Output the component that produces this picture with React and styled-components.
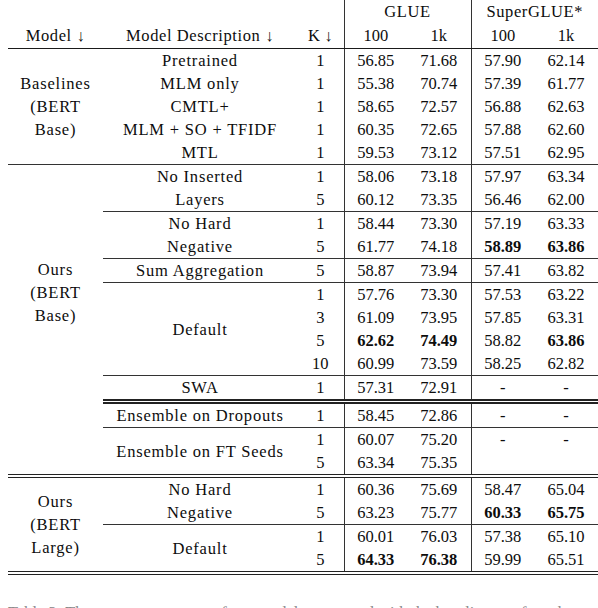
import React from "react"
import styled, { createGlobalStyle } from "styled-components"

const serif = `"Liberation Serif", "Times New Roman", "DejaVu Serif", serif`

const GlobalStyle = createGlobalStyle`
  html, body {
    margin: 0;
    padding: 0;
    background: #fff;
  }
  body {
    font-family: ${serif};
    color: #0d0d0d;
  }
`

const lines = {
  rule: "1px solid #333",
  head: "1px solid #1a1a1a",
  double: "5px double #222",
  section: "4px double #222",
  bottom: "4px double #222",
}

const widths = [95, 194, 47, 63, 64, 63, 64]

const rows = [
  { model: { text: ["Baselines", "(BERT", "Base)"], span: 5, line: "rule" }, desc: { text: ["Pretrained"] }, k: 1, v: ["56.85", "71.68", "57.90", "62.14"] },
  { desc: { text: ["MLM only"] }, k: 1, v: ["55.38", "70.74", "57.39", "61.77"] },
  { desc: { text: ["CMTL+"] }, k: 1, v: ["58.65", "72.57", "56.88", "62.63"] },
  { desc: { text: ["MLM + SO + TFIDF"] }, k: 1, v: ["60.35", "72.65", "57.88", "62.60"] },
  { desc: { text: ["MTL"], line: "rule" }, k: 1, v: ["59.53", "73.12", "57.51", "62.95"], line: "rule" },

  { model: { text: ["Ours", "(BERT", "Base)"], span: 13, line: "section", top: 93 }, desc: { text: ["No Inserted", "Layers"], span: 2, line: "rule" }, k: 1, v: ["58.06", "73.18", "57.97", "63.34"] },
  { k: 5, v: ["60.12", "73.35", "56.46", "62.00"], line: "rule" },
  { desc: { text: ["No Hard", "Negative"], span: 2, line: "rule" }, k: 1, v: ["58.44", "73.30", "57.19", "63.33"] },
  { k: 5, v: ["61.77", "74.18", "58.89", "63.86"], b: [2, 3], line: "rule" },
  { desc: { text: ["Sum Aggregation"], line: "rule" }, k: 5, v: ["58.87", "73.94", "57.41", "63.82"], line: "rule" },
  { desc: { text: ["Default"], span: 4, line: "rule" }, k: 1, v: ["57.76", "73.30", "57.53", "63.22"] },
  { k: 3, v: ["61.09", "73.95", "57.85", "63.31"] },
  { k: 5, v: ["62.62", "74.49", "58.82", "63.86"], b: [0, 1, 3] },
  { k: 10, v: ["60.99", "73.59", "58.25", "62.82"], line: "rule" },
  { desc: { text: ["SWA"], line: "double" }, k: 1, v: ["57.31", "72.91", "-", "-"], line: "double" },
  { desc: { text: ["Ensemble on Dropouts"], line: "rule" }, k: 1, v: ["58.45", "72.86", "-", "-"], line: "rule" },
  { desc: { text: ["Ensemble on FT Seeds"], span: 2, line: "section" }, k: 1, v: ["60.07", "75.20", "-", "-"] },
  { k: 5, v: ["63.34", "75.35", "", ""], line: "section" },

  { model: { text: ["Ours", "(BERT", "Large)"], span: 4, line: "bottom" }, desc: { text: ["No Hard", "Negative"], span: 2, line: "rule" }, k: 1, v: ["60.36", "75.69", "58.47", "65.04"] },
  { k: 5, v: ["63.23", "75.77", "60.33", "65.75"], b: [2, 3], line: "rule" },
  { desc: { text: ["Default"], span: 2, line: "bottom" }, k: 1, v: ["60.01", "76.03", "57.38", "65.10"] },
  { k: 5, v: ["64.33", "76.38", "59.99", "65.51"], b: [0, 1], line: "bottom" },
]

const Page = styled.div`
  width: 590px;
  height: 608px;
  padding-left: 8px;
  overflow: hidden;
  font-family: ${serif};
`

const Table = styled.table`
  width: 590px;
  border-collapse: collapse;
  table-layout: fixed;
  font-family: ${serif};
  font-size: 16.5px;
  color: #0d0d0d;
`

const Col = styled.col`
  width: ${p => p.$w}px;
`

const Cell = styled.td`
  height: 23px;
  padding: 0;
  font-family: ${serif};
  line-height: 23px;
  text-align: center;
  vertical-align: ${p => (p.$top ? "top" : "middle")};
  padding-top: ${p => p.$top || 0}px;
  white-space: nowrap;
  font-weight: ${p => (p.$bold ? 700 : 400)};
  border-left: ${p => (p.$sep ? lines.rule : "none")};
  border-bottom: ${p => (p.$line ? lines[p.$line] : "none")};
`

const HeadCell = styled.th`
  height: 24px;
  padding: 0;
  font-family: ${serif};
  line-height: 24px;
  font-weight: 400;
  text-align: center;
  white-space: nowrap;
  letter-spacing: ${p => (p.$wide ? 0.6 : 0)}px;
  border-left: ${p => (p.$sep ? lines.rule : "none")};
  border-bottom: ${p => (p.$rule ? lines.head : "none")};
`

const LabelLine = styled.div`
  line-height: 23px;
  letter-spacing: 0.8px;
`

const Caption = styled.p`
  margin: 28px 0 0;
  font-family: ${serif};
  font-size: 16.5px;
  line-height: 20px;
  color: #8a8a8a;
  white-space: nowrap;
`

const Label = ({ text }) =>
  text.map(t => <LabelLine key={t}>{t}</LabelLine>)

const Row = ({ row }) => {
  const { model, desc, k, v, b = [], line } = row
  return (
    <tr>
      {model && (
        <Cell rowSpan={model.span} $line={model.line} $top={model.top}>
          <Label text={model.text} />
        </Cell>
      )}
      {desc && (
        <Cell rowSpan={desc.span || 1} $line={desc.line}>
          <Label text={desc.text} />
        </Cell>
      )}
      <Cell $line={line}>{k}</Cell>
      {v.map((val, i) => (
        <Cell key={i} $line={line} $sep={i === 0 || i === 2} $bold={b.includes(i)}>
          {val}
        </Cell>
      ))}
    </tr>
  )
}

const App = () => (
  <Page>
    <GlobalStyle />
    <Table>
      <colgroup>
        {widths.map((w, i) => (
          <Col key={i} $w={w} />
        ))}
      </colgroup>
      <thead>
        <tr>
          <HeadCell />
          <HeadCell />
          <HeadCell />
          <HeadCell colSpan={2} $sep $wide>GLUE</HeadCell>
          <HeadCell colSpan={2} $sep $wide>SuperGLUE*</HeadCell>
        </tr>
        <tr>
          <HeadCell $rule $wide>Model ↓</HeadCell>
          <HeadCell $rule $wide>Model Description ↓</HeadCell>
          <HeadCell $rule>K ↓</HeadCell>
          <HeadCell $rule $sep>100</HeadCell>
          <HeadCell $rule>1k</HeadCell>
          <HeadCell $rule $sep>100</HeadCell>
          <HeadCell $rule>1k</HeadCell>
        </tr>
      </thead>
      <tbody>
        {rows.map((row, i) => (
          <Row key={i} row={row} />
        ))}
      </tbody>
    </Table>
    <Caption>Table 3: The average accuracy of our models compared with the baselines on few-shot tasks.</Caption>
  </Page>
)

export default App
